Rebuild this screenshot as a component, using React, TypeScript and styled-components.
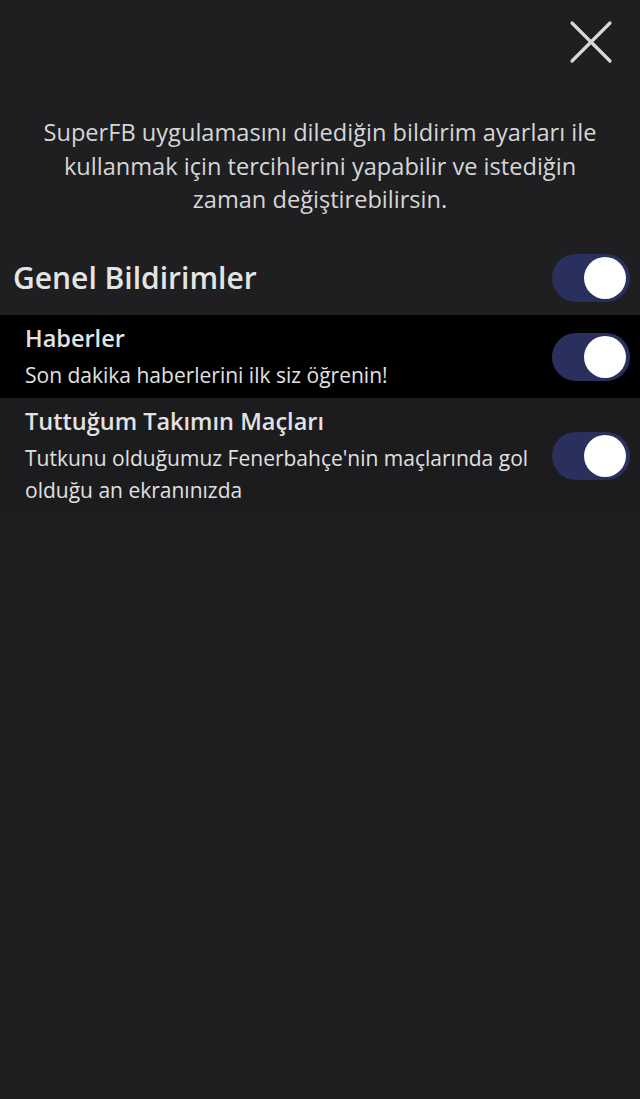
import styled, { createGlobalStyle } from "styled-components";

const GlobalStyle = createGlobalStyle`
  html, body {
    margin: 0;
    padding: 0;
    background: #1f1f21;
  }
  body {
    font-family: "Open Sans", Lato, "Noto Sans", sans-serif;
    -webkit-font-smoothing: antialiased;
  }
`;

const Page = styled.div`
  min-height: 1099px;
  background: #1f1f21;
  color: #e2e2e2;
`;

const TopBar = styled.div`
  display: flex;
  justify-content: flex-end;
  padding: 20px 27px 0 0;
  height: 44px;
`;

const CloseButton = styled.button`
  width: 44px;
  height: 44px;
  padding: 0;
  border: none;
  background: transparent;
  cursor: pointer;
  display: flex;
  align-items: center;
  justify-content: center;
`;

const Intro = styled.p`
  margin: 52px 28px 0;
  text-align: center;
  font-size: 23.6px;
  line-height: 33.5px;
  color: #d6d6d6;
`;

const SectionHeader = styled.div`
  display: flex;
  align-items: center;
  justify-content: space-between;
  height: 74px;
  margin-top: 24px;
  padding: 0 10px 0 13px;
`;

const SectionTitle = styled.h2`
  margin: 0;
  font-size: 30px;
  font-weight: 600;
  color: #e4e4e4;
`;

const Row = styled.div<{ $dark?: boolean }>`
  display: flex;
  align-items: center;
  justify-content: space-between;
  gap: 20px;
  padding: 8px 10px 7px 25px;
  background: ${({ $dark }) => ($dark ? "#000000" : "#1c1c1e")};
`;

const RowText = styled.div`
  display: flex;
  flex-direction: column;
  gap: 6px;
`;

const RowTitle = styled.div`
  font-size: 23.5px;
  font-weight: 600;
  line-height: 30px;
  color: #e2e2e2;
`;

const RowDesc = styled.div`
  font-size: 21px;
  line-height: 32px;
  color: #e0e0e0;
  max-width: 510px;
`;

const Track = styled.div<{ $on: boolean }>`
  flex-shrink: 0;
  position: relative;
  width: 78px;
  height: 48px;
  border-radius: 24px;
  background: ${({ $on }) => ($on ? "#29305e" : "#4a4a4e")};
`;

const Knob = styled.div<{ $on: boolean }>`
  position: absolute;
  top: 3px;
  left: ${({ $on }) => ($on ? "32px" : "3px")};
  width: 42px;
  height: 42px;
  border-radius: 50%;
  background: #ffffff;
`;

const Toggle = ({ on }: { on: boolean }) => (
  <Track $on={on}>
    <Knob $on={on} />
  </Track>
);

const CloseIcon = () => (
  <svg width="44" height="44" viewBox="0 0 44 44">
    <path
      d="M3 3 L41 41 M41 3 L3 41"
      stroke="#d9d9d9"
      strokeWidth="3.2"
      strokeLinecap="round"
    />
  </svg>
);

const App = () => {
  return (
    <>
      <GlobalStyle />
      <Page>
        <TopBar>
          <CloseButton aria-label="Kapat">
            <CloseIcon />
          </CloseButton>
        </TopBar>
        <Intro>
          SuperFB uygulamasını dilediğin bildirim ayarları ile kullanmak için
          tercihlerini yapabilir ve istediğin zaman değiştirebilirsin.
        </Intro>
        <SectionHeader>
          <SectionTitle>Genel Bildirimler</SectionTitle>
          <Toggle on />
        </SectionHeader>
        <Row $dark>
          <RowText>
            <RowTitle>Haberler</RowTitle>
            <RowDesc>Son dakika haberlerini ilk siz öğrenin!</RowDesc>
          </RowText>
          <Toggle on />
        </Row>
        <Row>
          <RowText>
            <RowTitle>Tuttuğum Takımın Maçları</RowTitle>
            <RowDesc>
              Tutkunu olduğumuz Fenerbahçe'nin maçlarında gol olduğu an
              ekranınızda
            </RowDesc>
          </RowText>
          <Toggle on />
        </Row>
      </Page>
    </>
  );
};

export default App;
